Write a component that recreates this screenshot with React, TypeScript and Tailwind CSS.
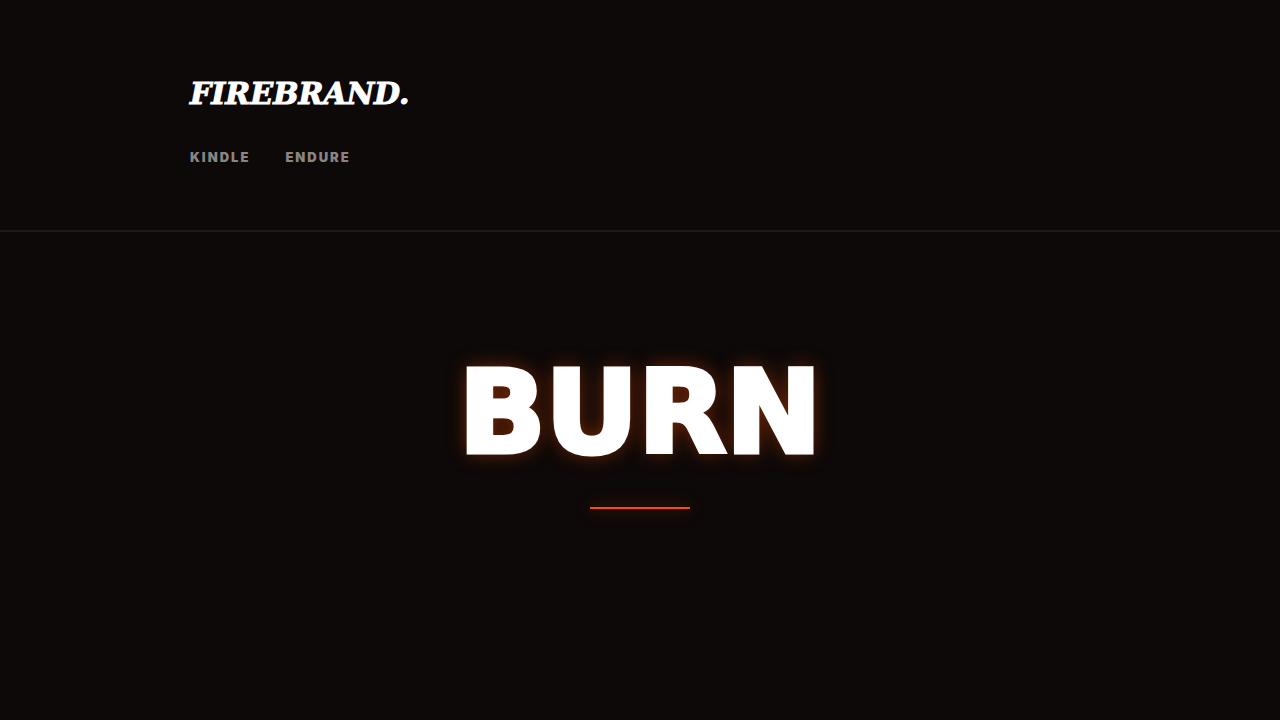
import React from 'react';

const links = [
  { label: 'Kindle', href: '#kindle' },
  { label: 'Endure', href: '#endure' },
];

const Header: React.FC = () => (
  <header className="border-b-2 border-[#1c1a19] px-5 py-16">
    <div className="max-w-[900px] mx-auto">
      <a
        href="#"
        className="block w-fit font-['DejaVu_Serif',serif] text-[30px] leading-[60px] font-bold italic uppercase text-white [-webkit-text-stroke:1px_#fff]"
      >
        Firebrand.
      </a>
      <nav className="flex gap-[35px] mt-[25px] mb-px">
        {links.map((link) => (
          <a
            key={link.href}
            href={link.href}
            className="font-['Inter',sans-serif] text-[13px] leading-4 font-black uppercase tracking-[2px] text-[#8a8583] hover:text-[#ff4d00] transition-colors"
          >
            {link.label}
          </a>
        ))}
      </nav>
    </div>
  </header>
);

const Hero: React.FC = () => (
  <main className="flex flex-col items-center px-5 pt-[123px]">
    <h1 className="text-[114px] leading-[115px] font-black uppercase text-white [-webkit-text-stroke:5px_#fff] [text-shadow:0_0_20px_rgba(255,77,0,0.5)]">
      Burn
    </h1>
    <div className="w-[100px] h-0.5 mt-[37px] bg-[#ff4d00] shadow-[0_0_15px_rgba(255,77,0,0.6)]" />
  </main>
);

const App: React.FC = () => {
  return (
    <div className="min-h-screen bg-[#0d0908] font-['DejaVu_Sans',sans-serif]">
      <Header />
      <Hero />
    </div>
  );
};

export default App;
